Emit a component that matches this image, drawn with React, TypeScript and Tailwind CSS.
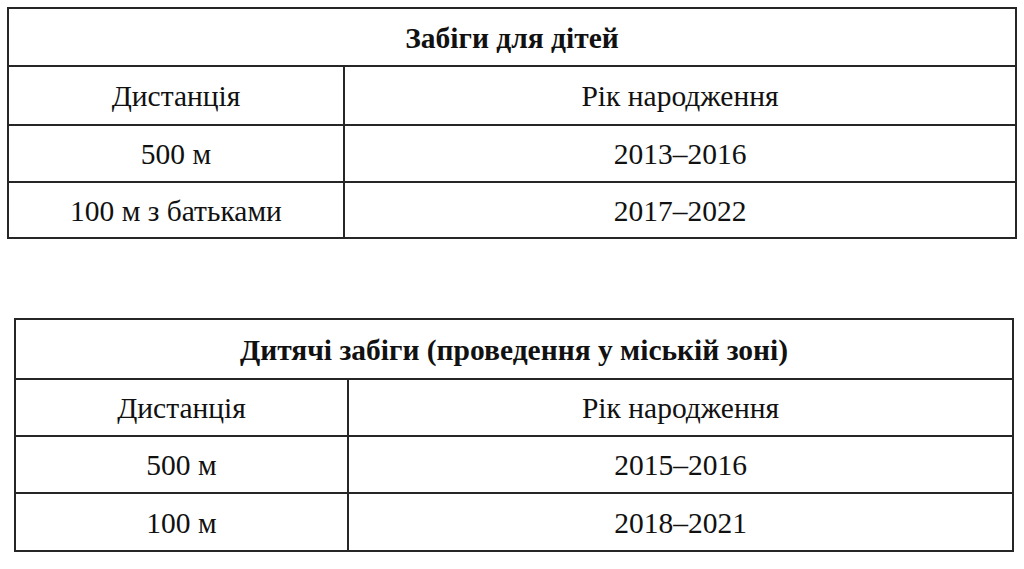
const rows1 = [
  ["500 м", "2013–2016"],
  ["100 м з батьками", "2017–2022"],
];

const rows2 = [
  ["500 м", "2015–2016"],
  ["100 м", "2018–2021"],
];

type TableProps = {
  title: string;
  rows: string[][];
  colClass: string;
  heights: string[];
};

const Cell = ({ children, className }: { children: React.ReactNode; className?: string }) => (
  <div className={`flex items-center justify-center pt-[3px] ${className ?? ""}`}>{children}</div>
);

const RunTable = ({ title, rows, colClass, heights }: TableProps) => {
  return (
    <div className="border-2 border-[#262626] text-[29.5px] leading-none text-[#111]">
      <Cell className={`${heights[0]} font-bold`}>{title}</Cell>
      <div className={`flex border-t-2 border-[#262626] ${heights[1]}`}>
        <Cell className={colClass}>Дистанція</Cell>
        <Cell className="flex-1 border-l-2 border-[#262626]">Рік народження</Cell>
      </div>
      {rows.map(([dist, year], i) => (
        <div key={i} className={`flex border-t-2 border-[#262626] ${heights[i + 2]}`}>
          <Cell className={colClass}>{dist}</Cell>
          <Cell className="flex-1 border-l-2 border-[#262626]">{year}</Cell>
        </div>
      ))}
    </div>
  );
};

export default function App() {
  return (
    <div
      className="w-[1024px] h-[569px] bg-white overflow-hidden"
      style={{ fontFamily: '"Liberation Serif", "Times New Roman", serif' }}
    >
      <div className="ml-[7px] mt-[7px] w-[1010px]">
        <RunTable
          title="Забіги для дітей"
          rows={rows1}
          colClass="w-[334px]"
          heights={["h-[56px]", "h-[59px]", "h-[57px]", "h-[56px]"]}
        />
      </div>
      <div className="ml-[14px] mt-[79px] w-[1000px]">
        <RunTable
          title="Дитячі забіги (проведення у міській зоні)"
          rows={rows2}
          colClass="w-[331px]"
          heights={["h-[58px]", "h-[57px]", "h-[57px]", "h-[58px]"]}
        />
      </div>
    </div>
  );
}
